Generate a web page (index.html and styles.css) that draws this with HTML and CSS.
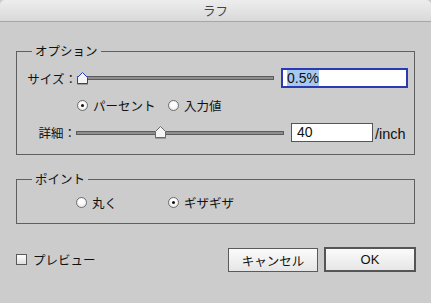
FILE: index.html
```html
<!DOCTYPE html>
<html lang="ja">
<head>
<meta charset="utf-8">
<title>ラフ</title>
<link rel="stylesheet" href="styles.css">
</head>
<body>
<div class="window">
  <div class="titlebar">ラフ</div>
  <div class="content">
    <fieldset class="group options">
      <legend>オプション</legend>
      <div class="row size-row">
        <span class="label">サイズ：</span>
        <div class="slider size-slider">
          <div class="track"></div>
          <svg class="thumb" style="left:0px" width="11" height="13" viewBox="0 0 11 13">
            <rect x="0" y="11" width="11" height="2" fill="#9a9a9a"/>
            <polygon points="0.5,5.5 5.5,0.5 10.5,5.5 10.5,11.5 0.5,11.5" fill="#f4f4f4" stroke="#2a3bb8" stroke-width="1"/>
          </svg>
        </div>
        <div class="field wide focused"><span class="sel">0.5%</span></div>
      </div>
      <div class="row radio-row">
        <label class="opt first"><span class="radio on"></span>パーセント</label>
        <label class="opt"><span class="radio"></span>入力値</label>
      </div>
      <div class="row detail-row">
        <span class="label">詳細：</span>
        <div class="slider detail-slider">
          <div class="track"></div>
          <svg class="thumb" style="left:79px" width="11" height="13" viewBox="0 0 11 13">
            <rect x="0" y="11" width="11" height="2" fill="#9a9a9a"/>
            <polygon points="0.5,5.5 5.5,0.5 10.5,5.5 10.5,11.5 0.5,11.5" fill="#f4f4f4" stroke="#6a6a6a" stroke-width="1"/>
          </svg>
        </div>
        <div class="field narrow">40</div>
        <span class="unit">/inch</span>
      </div>
    </fieldset>

    <fieldset class="group points">
      <legend>ポイント</legend>
      <div class="row radio-row points-row">
        <label class="opt first"><span class="radio"></span>丸く</label>
        <label class="opt"><span class="radio on"></span>ギザギザ</label>
      </div>
    </fieldset>

    <div class="footer">
      <label class="check"><span class="box"></span>プレビュー</label>
      <div class="buttons">
        <button class="btn cancel">キャンセル</button>
        <button class="btn ok">OK</button>
      </div>
    </div>
  </div>
</div>
</body>
</html>
```

FILE: styles.css
```css
* { box-sizing: border-box; }

html, body {
  margin: 0;
  padding: 0;
  background: #cccccc;
}

body {
  width: 431px;
  height: 303px;
  overflow: hidden;
  font-family: "Noto Sans CJK JP", "Noto Sans", sans-serif;
  font-size: 12.5px;
  color: #111;
}

.window {
  width: 431px;
  height: 303px;
  background: #cccccc;
  border-radius: 5px 5px 0 0;
  overflow: hidden;
}

.titlebar {
  height: 22px;
  line-height: 21px;
  text-align: center;
  font-size: 12.5px;
  color: #454545;
  background: linear-gradient(#ededed, #d9d9d9);
  border-bottom: 1px solid #a6a6a6;
}

.content {
  padding: 0 15px 0 16px;
}

.group {
  margin: 0;
  width: 399px;
  border: 1px solid #5f5f5f;
  padding: 0 0 0 9px;
  min-width: 0;
}

.group legend {
  margin-left: 6px;
  padding: 0 3px;
  line-height: 16px;
  height: 16px;
  font-size: 12.5px;
}

.options {
  margin-top: 21px;
  padding-top: 9px;
  padding-bottom: 12px;
}

.points {
  margin-top: 16px;
  padding-top: 7px;
  padding-bottom: 13px;
}

.row {
  display: flex;
  align-items: center;
}

.size-row, .detail-row {
  height: 20px;
}

.label {
  width: 50px;
  text-align: right;
  white-space: nowrap;
}

.size-row .label { width: 51px; }

.slider {
  position: relative;
  height: 20px;
}

.size-slider { width: 197px; }
.detail-slider { width: 208px; }

.track {
  position: absolute;
  left: 0;
  right: 0;
  top: 8px;
  height: 4px;
  background: #8e8e8e;
  border: 1px solid #5c5c5c;
}

.detail-row .track { top: 9px; }

.thumb {
  position: absolute;
  top: 4px;
  display: block;
}

.field {
  height: 20px;
  background: #fff;
  border: 1px solid #555;
  font-family: "Liberation Sans", Arial, sans-serif;
  font-size: 14px;
  line-height: 18px;
  padding-left: 4px;
  color: #111;
}

.field.wide {
  width: 127px;
  margin-left: 7px;
}

.field.focused {
  border: 2px solid #2a3ab3;
  line-height: 16px;
  padding-left: 4px;
}

.sel {
  background: #a7c8ef;
  display: inline-block;
  line-height: 16px;
}

.field.narrow {
  width: 82px;
  height: 19px;
  line-height: 17px;
  margin-left: 7px;
  padding-left: 5px;
}

.unit {
  margin-left: 2px;
  font-family: "Liberation Sans", Arial, sans-serif;
  font-size: 14.5px;
  padding-top: 3px;
}

.radio-row {
  height: 16px;
  margin-top: 9px;
  padding-left: 51px;
}

.detail-row { margin-top: 9px; }

.points .radio-row {
  margin-top: 0;
  padding-left: 50px;
}

.opt {
  display: flex;
  align-items: center;
  white-space: nowrap;
}

.opt.first { width: 91px; }
.points .opt.first { width: 92px; }

.radio {
  width: 11px;
  height: 11px;
  border-radius: 50%;
  border: 1px solid #6e6e6e;
  background: radial-gradient(circle at 50% 40%, #ffffff 30%, #dcdcdc 100%);
  margin-right: 5px;
  position: relative;
  flex: none;
}

.radio.on::after {
  content: "";
  position: absolute;
  left: 3px;
  top: 3px;
  width: 3px;
  height: 3px;
  border-radius: 50%;
  background: #111;
}

.footer {
  margin-top: 23px;
  width: 400px;
  height: 25px;
  display: flex;
  align-items: center;
  justify-content: space-between;
}

.check {
  display: flex;
  align-items: center;
  white-space: nowrap;
}

.box {
  width: 11px;
  height: 11px;
  border: 1px solid #5a5a5a;
  background: linear-gradient(#ffffff, #dedede);
  margin-right: 6px;
  flex: none;
}

.buttons {
  display: flex;
  gap: 6px;
}

.btn {
  height: 24px;
  margin: 0;
  padding: 0;
  font-family: "Noto Sans CJK JP", "Noto Sans", sans-serif;
  font-size: 12.5px;
  color: #111;
  background: linear-gradient(#fbfbfb, #e6e6e6);
  border: 1px solid #5a5a5a;
  border-radius: 0;
}

.btn.cancel { width: 90px; margin-top: 1px; }

.btn.ok {
  width: 92px;
  height: 25px;
  border: 2px solid #555;
  font-family: "Liberation Sans", Arial, sans-serif;
  font-size: 13px;
}
```
